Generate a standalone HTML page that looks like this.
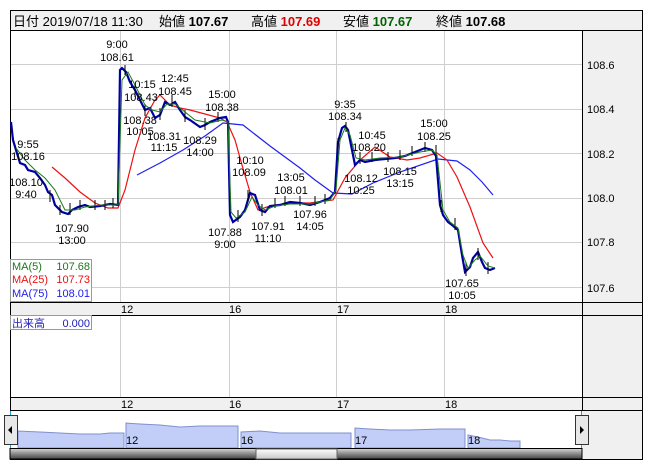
<!DOCTYPE html>
<html><head><meta charset="utf-8"><style>
html,body{margin:0;padding:0;background:#fff;}
svg{display:block;font-family:"Liberation Sans","Noto Sans CJK JP",sans-serif;}
</style></head><body>
<svg width="652" height="469" viewBox="0 0 652 469" xmlns="http://www.w3.org/2000/svg">
<defs>
<linearGradient id="sb" x1="0" y1="0" x2="0" y2="1"><stop offset="0" stop-color="#d8d8d8"/><stop offset="0.5" stop-color="#8a8a8a"/><stop offset="1" stop-color="#444"/></linearGradient>
<linearGradient id="th" x1="0" y1="0" x2="0" y2="1"><stop offset="0" stop-color="#fff"/><stop offset="1" stop-color="#c8c8c8"/></linearGradient>
</defs>
<rect x="0" y="0" width="652" height="469" fill="#fff"/>
<!-- header -->
<rect x="10.5" y="10.5" width="632" height="20" fill="#f0f0f0" stroke="#000"/>
<g font-size="13" fill="#000">
<text x="13" y="26">日付 2019/07/18 11:30</text>
<text x="159" y="26">始値 <tspan font-weight="bold">107.67</tspan></text>
<text x="251" y="26">高値 <tspan font-weight="bold" fill="#e00000">107.69</tspan></text>
<text x="343" y="26">安値 <tspan font-weight="bold" fill="#006400">107.67</tspan></text>
<text x="436" y="26">終値 <tspan font-weight="bold">107.68</tspan></text>
</g>
<!-- right axis grey -->
<rect x="582" y="31" width="60.5" height="428" fill="#f0f0f0"/>
<!-- axis rows -->
<rect x="10" y="302" width="632" height="13" fill="#f0f0f0"/>
<rect x="10" y="397" width="632" height="13" fill="#f0f0f0"/>
<!-- grid -->
<g stroke="#cfcfcf" stroke-width="1">
<line x1="10" y1="64.5" x2="582" y2="64.5"/><line x1="10" y1="109.5" x2="582" y2="109.5"/>
<line x1="10" y1="153.5" x2="582" y2="153.5"/><line x1="10" y1="198.5" x2="582" y2="198.5"/>
<line x1="10" y1="242.5" x2="582" y2="242.5"/><line x1="10" y1="287.5" x2="582" y2="287.5"/>
<line x1="120.5" y1="31" x2="120.5" y2="302"/><line x1="229.5" y1="31" x2="229.5" y2="302"/>
<line x1="336.5" y1="31" x2="336.5" y2="302"/><line x1="444.5" y1="31" x2="444.5" y2="302"/>
<line x1="120.5" y1="315" x2="120.5" y2="397"/><line x1="229.5" y1="315" x2="229.5" y2="397"/>
<line x1="336.5" y1="315" x2="336.5" y2="397"/><line x1="444.5" y1="315" x2="444.5" y2="397"/>
</g>
<!-- borders -->
<g stroke="#000" fill="none">
<line x1="582.5" y1="31" x2="582.5" y2="410"/>
<line x1="10" y1="302.5" x2="642" y2="302.5"/><line x1="10" y1="315.5" x2="642" y2="315.5"/>
<line x1="10" y1="397.5" x2="642" y2="397.5"/><line x1="10" y1="410.5" x2="642" y2="410.5"/>
<rect x="10.5" y="10.5" width="632" height="449"/>
</g>
<!-- price axis labels -->
<g font-size="11" fill="#000">
<text x="587" y="69">108.6</text><text x="587" y="113">108.4</text><text x="587" y="158">108.2</text>
<text x="587" y="202">108.0</text><text x="587" y="246">107.8</text><text x="587" y="292">107.6</text>
<text x="121" y="313">12</text><text x="229" y="313">16</text><text x="337" y="313">17</text><text x="445" y="313">18</text>
<text x="121" y="408">12</text><text x="229" y="408">16</text><text x="337" y="408">17</text><text x="445" y="408">18</text>
</g>
<!-- MA75 -->
<polyline fill="none" stroke="#2020ee" stroke-width="1.2" points="137,175 160,163 183,150 205,136 223,123 243,125 270,146 300,168 315,180 333,193 352,194 373,183 400,172 438,159 457,161 470,170 482,182 493,195"/>
<!-- MA25 -->
<polyline fill="none" stroke="#ee1010" stroke-width="1.2" points="52,167 65,178 80,192 95,203 108,208 118,208 125,190 135,150 145,118 155,100 160,95 170,105 180,108 190,110 205,114 220,118 227,122 235,140 242,165 250,192 258,210 270,206 290,203 310,203 333,200 345,178 360,160 375,147 390,157 407,160 420,158 437,153 447,160 457,177 470,207 483,243 493,258"/>
<!-- price candles (approx) -->
<polyline fill="none" stroke="#0000a0" stroke-width="2.2" points="11,122 13,140 16,150 20,163 25,165 28,170 35,172 40,178 45,185 48,192 52,195 55,205 62,212 68,214 72,210 78,207 85,205 90,207 100,206 110,204 118,205 120,70 122,68 126,72 130,82 135,90 140,100 145,110 150,108 155,118 160,115 165,102 170,105 175,102 180,110 185,117 190,120 200,127 205,125 210,122 220,118 226,117 228,122 230,215 233,222 240,217 245,210 250,193 255,195 260,210 265,212 270,206 280,205 290,202 300,203 310,205 320,202 330,198 335,192 338,142 342,128 345,126 348,130 350,140 355,165 360,160 365,162 375,160 385,159 395,158 405,156 415,152 425,148 432,150 436,156 440,205 443,215 448,222 452,225 458,230 462,255 465,272 470,267 473,258 478,252 482,262 485,268 490,270 495,268"/>
<g stroke="#000" stroke-width="1">
<path d="M50 190v12M60 205v10M70 203v12M80 200v10M95 200v10M105 200v10M113 198v10M125 65v10M135 85v12M145 104v12M160 108v12M172 95v12M185 110v12M205 118v12M218 112v10M238 210v12M248 190v12M262 204v12M275 198v10M285 196v10M300 196v10M315 196v10M325 194v10M338 138v12M346 122v10M360 152v12M372 152v10M388 152v10M400 150v10M412 146v10M425 142v10M436 145v10M441 200v12M455 218v12M466 262v14M478 248v12M488 262v12"/>
</g>
<!-- MA5 -->
<polyline fill="none" stroke="#1a7a1a" stroke-width="1" points="16,148 25,160 35,170 45,178 55,190 65,210 75,210 85,207 100,205 115,205 118,205 122,80 128,72 135,85 145,105 152,110 160,112 167,104 175,104 185,112 195,120 210,123 222,120 228,122 231,212 236,218 245,212 252,197 258,205 265,210 275,206 290,204 310,204 330,200 336,190 340,140 345,128 350,135 356,158 365,160 380,158 400,157 420,152 432,150 437,155 443,210 450,222 458,228 463,255 468,268 475,260 480,256 488,266 495,268"/>
<!-- annotations -->
<g font-size="11" fill="#000" text-anchor="middle">
<text x="117" y="48">9:00</text><text x="117" y="61">108.61</text>
<text x="142" y="88">10:15</text><text x="141" y="101">108.43</text>
<text x="175" y="82">12:45</text><text x="175" y="95">108.45</text>
<text x="222" y="98">15:00</text><text x="222" y="111">108.38</text>
<text x="140" y="124">108.38</text><text x="140" y="135">10:05</text>
<text x="164" y="140">108.31</text><text x="164" y="151">11:15</text>
<text x="200" y="144">108.29</text><text x="200" y="156">14:00</text>
<text x="28" y="148">9:55</text><text x="28" y="160">108.16</text>
<text x="26" y="186">108.10</text><text x="26" y="198">9:40</text>
<text x="72" y="232">107.90</text><text x="72" y="244">13:00</text>
<text x="250" y="164">10:10</text><text x="249" y="176">108.09</text>
<text x="291" y="181">13:05</text><text x="291" y="194">108.01</text>
<text x="225" y="236">107.88</text><text x="225" y="248">9:00</text>
<text x="268" y="230">107.91</text><text x="268" y="242">11:10</text>
<text x="310" y="218">107.96</text><text x="310" y="230">14:05</text>
<text x="345" y="108">9:35</text><text x="345" y="120">108.34</text>
<text x="372" y="139">10:45</text><text x="369" y="151">108.20</text>
<text x="361" y="182">108.12</text><text x="361" y="194">10:25</text>
<text x="400" y="175">108.15</text><text x="400" y="187">13:15</text>
<text x="434" y="127">15:00</text><text x="434" y="140">108.25</text>
<text x="462" y="287">107.65</text><text x="462" y="299">10:05</text>
</g>
<!-- legends -->
<rect x="10.5" y="259.5" width="81" height="42" fill="#fff" stroke="#999"/>
<g font-size="11">
<text x="12" y="270" fill="#1a7a1a">MA(5)</text><text x="90" y="270" fill="#1a7a1a" text-anchor="end">107.68</text>
<text x="12" y="283" fill="#ee1010">MA(25)</text><text x="90" y="283" fill="#ee1010" text-anchor="end">107.73</text>
<text x="12" y="297" fill="#2020ee">MA(75)</text><text x="90" y="297" fill="#2020ee" text-anchor="end">108.01</text>
</g>
<rect x="10.5" y="315.5" width="81" height="14" fill="#fff" stroke="#999"/>
<g font-size="11" fill="#2020bb"><text x="12" y="327">出来高</text><text x="90" y="327" text-anchor="end">0.000</text></g>
<!-- navigator -->
<g fill="#c2cdf8" stroke="#8090d0" stroke-width="1">
<path d="M18 448V431L40 432 60 433 80 434 100 434 110 433 124 433V448Z"/>
<path d="M126 448V423L140 424 160 425 180 427 200 426 220 426 238 426V448Z"/>
<path d="M241 448V432L260 431 280 433 300 433 320 433 351 433V448Z"/>
<path d="M355 448V428L370 429 390 430 410 430 440 429 465 429V448Z"/>
<path d="M468 448V435L478 437 490 440 500 440 510 441 520 441V448Z"/>
</g>
<g font-size="11" fill="#000"><text x="126" y="444">12</text><text x="241" y="444">16</text><text x="355" y="444">17</text><text x="468" y="444">18</text></g>
<rect x="10" y="448.5" width="572" height="10.5" fill="url(#sb)" stroke="#000"/>
<rect x="256" y="449" width="81" height="10" fill="url(#th)" stroke="#666"/>
<line x1="10.5" y1="411" x2="10.5" y2="448" stroke="#20a0d0"/>
<line x1="581.5" y1="411" x2="581.5" y2="448" stroke="#20a0d0"/>
<rect x="4.5" y="415.5" width="13" height="29" fill="#e8e8e8" stroke="#333"/>
<path d="M8 430l4-4v8z" fill="#000"/>
<rect x="575.5" y="415.5" width="13" height="29" fill="#e8e8e8" stroke="#333"/>
<path d="M584 430l-4-4v8z" fill="#000"/>
</svg>
</body></html>
